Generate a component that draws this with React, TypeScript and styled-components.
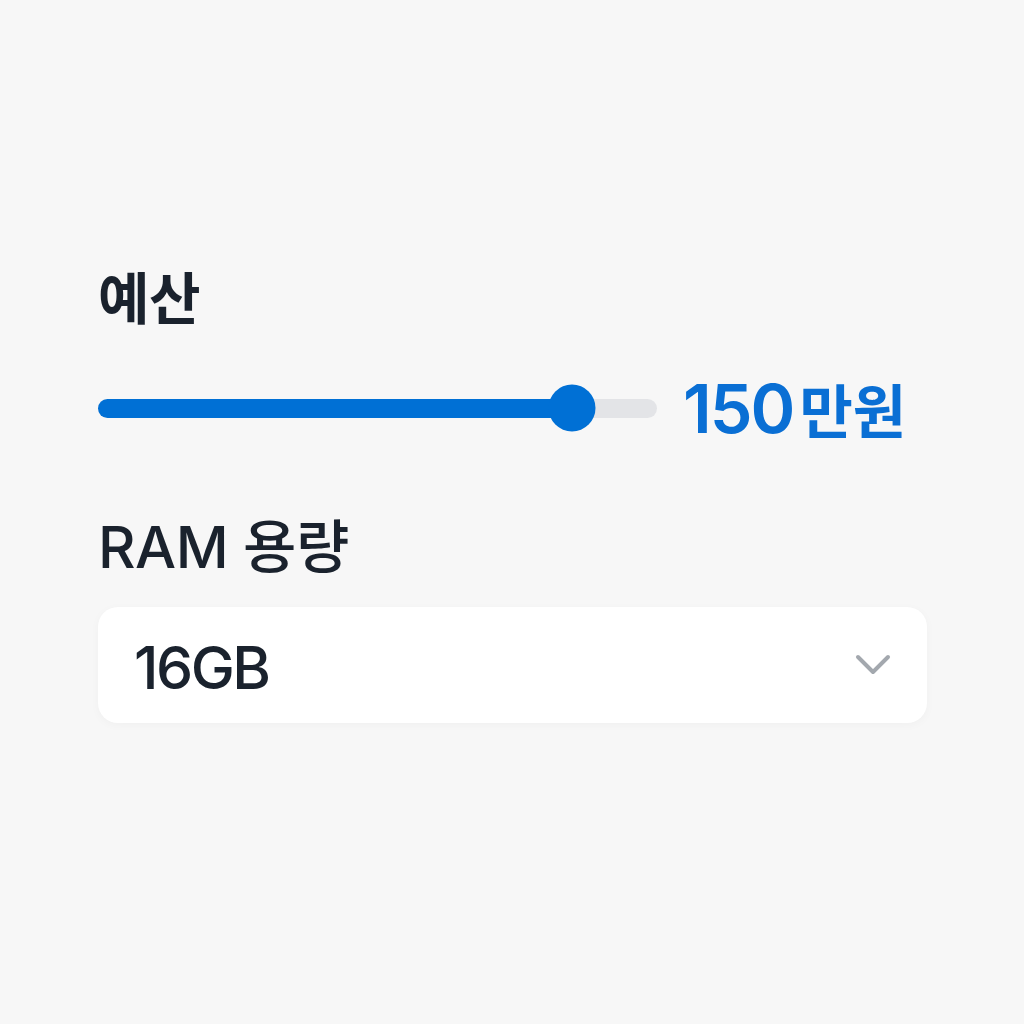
import { useState } from "react";
import styled, { createGlobalStyle } from "styled-components";

const GlobalStyle = createGlobalStyle`
  html, body {
    margin: 0;
    padding: 0;
    background: #f7f7f7;
  }
  body {
    font-family: Inter, "Noto Sans CJK KR", sans-serif;
    color: #1a222d;
  }
`;

const Page = styled.div`
  min-height: 1024px;
  box-sizing: border-box;
  padding: 266px 97px 0 98px;
  display: flex;
  flex-direction: column;
`;

const Label = styled.div<{ $weight?: number; $size?: number }>`
  font-family: Inter, "Noto Sans CJK KR", sans-serif;
  font-size: ${(p) => p.$size ?? 56}px;
  line-height: 66px;
  font-weight: ${(p) => p.$weight ?? 600};
  color: #1a222d;
  letter-spacing: -0.5px;
`;

const SliderRow = styled.div`
  display: flex;
  align-items: center;
  gap: 26px;
  margin-top: 42px;
  margin-bottom: 72px;
`;

const Track = styled.div`
  position: relative;
  width: 559px;
  height: 19px;
  border-radius: 10px;
  background: #e3e4e7;
`;

const Fill = styled.div`
  height: 100%;
  border-radius: 10px;
  background: #0070d5;
`;

const Thumb = styled.div`
  position: absolute;
  top: 50%;
  width: 47px;
  height: 47px;
  border-radius: 50%;
  background: #0070d5;
  transform: translate(-50%, -50%);
`;

const Value = styled.div`
  display: flex;
  align-items: baseline;
  gap: 6px;
  color: #0a6fd4;
`;

const Amount = styled.span`
  font-family: Inter, sans-serif;
  font-size: 68px;
  font-weight: 600;
  letter-spacing: -2px;
  line-height: 1;
`;

const Unit = styled.span`
  font-family: "Noto Sans CJK KR", sans-serif;
  font-size: 58px;
  font-weight: 600;
  line-height: 1;
`;

const Select = styled.div`
  margin-top: 27px;
  height: 116px;
  box-sizing: border-box;
  padding: 0 36px 0 36px;
  display: flex;
  align-items: center;
  justify-content: space-between;
  background: #ffffff;
  border-radius: 20px;
  box-shadow: 0 2px 10px rgba(0, 0, 0, 0.03);
`;

const SelectText = styled.span`
  font-family: Inter, sans-serif;
  font-size: 59px;
  font-weight: 500;
  letter-spacing: -2.5px;
  color: #1a222d;
  margin-top: 4px;
`;

const Chevron = () => (
  <svg width="36" height="22" viewBox="0 0 36 22" fill="none">
    <path
      d="M3 3 L18 18 L33 3"
      stroke="#a3a8ae"
      strokeWidth="4"
      strokeLinecap="round"
      strokeLinejoin="round"
    />
  </svg>
);

export default function App() {
  const [budget] = useState(150);
  const pct = 84.8;

  return (
    <>
      <GlobalStyle />
      <Page>
        <Label>예산</Label>
        <SliderRow>
          <Track>
            <Fill style={{ width: `${pct}%` }} />
            <Thumb style={{ left: `${pct}%` }} />
          </Track>
          <Value>
            <Amount>{budget}</Amount>
            <Unit>만원</Unit>
          </Value>
        </SliderRow>
        <Label $weight={500} $size={58}>RAM 용량</Label>
        <Select>
          <SelectText>16GB</SelectText>
          <Chevron />
        </Select>
      </Page>
    </>
  );
}
